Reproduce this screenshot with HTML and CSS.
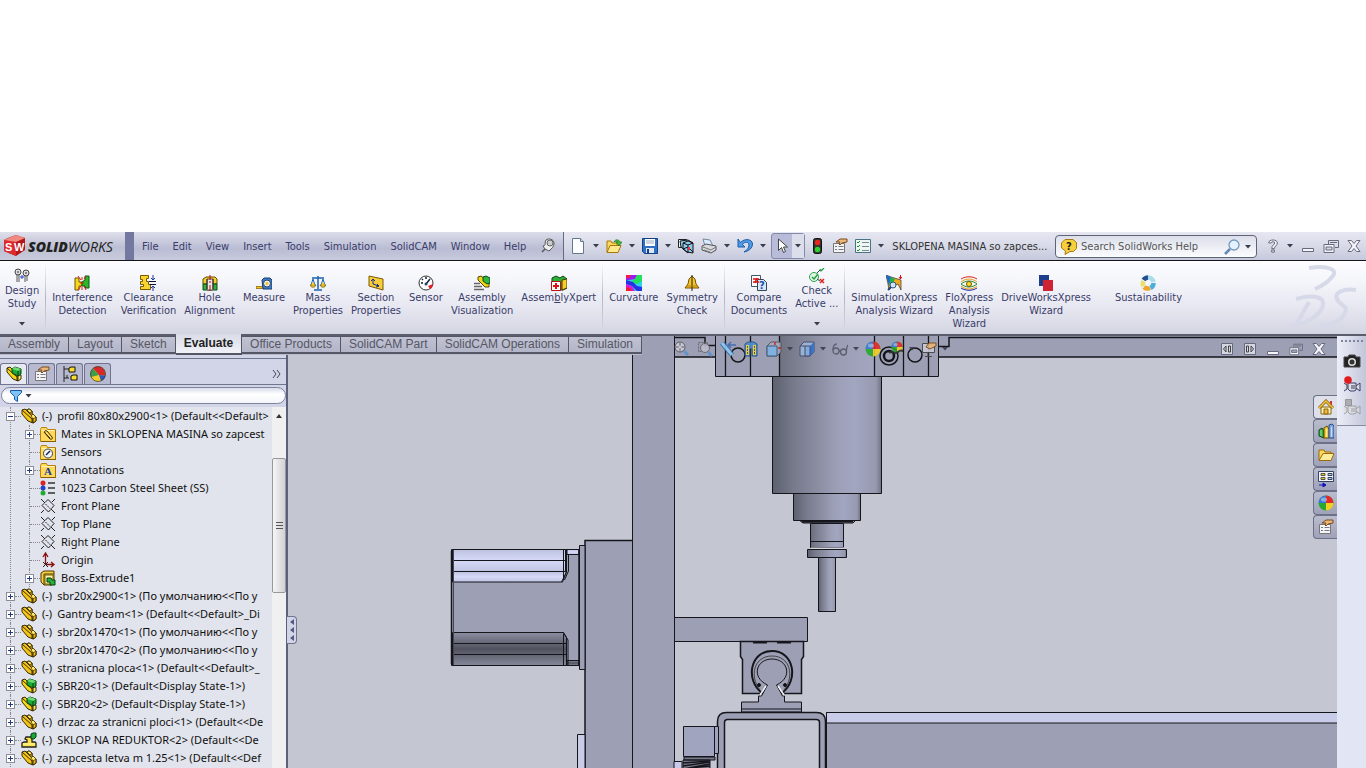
FILE: index.html
```
<!DOCTYPE html>
<html lang="en">
<head>
    <meta charset="UTF-8">
    <meta name="viewport" content="width=device-width, initial-scale=1.0">
    <title>SolidWorks - SKLOPENA MASINA</title>
    <link rel="stylesheet" href="styles.css">
</head>
<body>
    <svg class="defs" aria-hidden="true">
        <defs>
            <linearGradient id="cyl"><stop offset="0" stop-color="#5d606e"/><stop offset=".2" stop-color="#787b8c"/><stop offset=".6" stop-color="#9c9fb6"/><stop offset=".75" stop-color="#a3a6c1"/><stop offset=".95" stop-color="#9699ae"/><stop offset="1" stop-color="#6f7282"/></linearGradient>
            <linearGradient id="headShade"><stop offset="0" stop-color="#6e7180"/><stop offset=".5" stop-color="#979aaf"/><stop offset="1" stop-color="#a3a6bf"/></linearGradient>
            <linearGradient id="rib" x2="0" y2="1"><stop offset="0" stop-color="#8c8fa2"/><stop offset=".5" stop-color="#50525e"/><stop offset="1" stop-color="#858899"/></linearGradient>
            <linearGradient id="ribLight" x2="0" y2="1"><stop offset="0" stop-color="#bcc2e0"/><stop offset=".5" stop-color="#d6daf8"/><stop offset="1" stop-color="#bec4e2"/></linearGradient>
        </defs>
        <symbol id="i-part" viewBox="0 0 16 16">
            <path d="M1 2l3-1 8 8v6L7 13 1 6z" fill="#f4c518" stroke="#3a2c00"/>
            <path d="M1 2l10 9v4M5 2l3-1 3 2v3l4 3v4l-3 2" fill="none" stroke="#3a2c00"/>
            <path d="M6 2l2-1 3 2v3l4 3v4l-3 2V9z" fill="#f0b91c" stroke="#3a2c00"/>
            <path d="M6 2l2-1 3 2-2 2zM10 8l2-2 3 3-3 2z" fill="#ffe56b" stroke="#3a2c00" stroke-width=".7"/>
        </symbol>
        <symbol id="i-asm" viewBox="0 0 16 16">
            <path d="M1 2l3-1 8 8v6L7 13 1 6z" fill="#f4d518" stroke="#3a2c00"/>
            <path d="M1 2l10 9v4" fill="none" stroke="#3a2c00"/>
            <path d="M12 9h3v4l-3 2z" fill="#ffe56b" stroke="#3a2c00"/>
            <path d="M6 3l3-2 6 2v5l-3 2-6-3z" fill="#1fa838" stroke="#063d10"/>
            <path d="M6 3l6 2 3-2-6-2z" fill="#6bdc72"/><path d="M12 5v5" stroke="#063d10"/>
        </symbol>
        <symbol id="i-sub" viewBox="0 0 16 16">
            <path d="M1 15v-4l2-1h3V8L4 7l1-2h6v5h3l1 1v4z" fill="#ffe447" stroke="#222" stroke-width="1.3"/>
            <path d="M10 2l2-1h3v4l-2 2h-3z" fill="#1fa838" stroke="#063d10"/><path d="M2 12h12" stroke="#fff8b0"/>
        </symbol>
        <symbol id="i-folder" viewBox="0 0 16 16">
            <path d="M.5 3.5l1-2h5l1 2h8v12H.5z" fill="#ffd95c" stroke="#b98210"/><path d="M1.500 4.500h13" stroke="#fff3b8"/><path d="M1 15.500h15V4" fill="none" stroke="#8a5c00"/>
        </symbol>
        <symbol id="i-plane" viewBox="0 0 16 16">
            <path d="M1 1l14 14M8 1.500L14 7.500 8.500 14 2 7.500zM1 15l3-3M12 4l3-3" fill="none" stroke="#222"/><path d="M5 5l6 6" stroke="#e1e4ec" stroke-width="2"/><path d="M5.500 6l5 5" stroke="#222" stroke-dasharray="2 1"/>
        </symbol>
        <symbol id="i-ball" viewBox="0 0 16 16">
            <circle cx="8" cy="8" r="7.500" fill="#28a92e"/><path d="M8 8V.5A7.500 7.500 0 0 1 15.500 8z" fill="#e02c2a"/><path d="M8 8H.5A7.500 7.500 0 0 1 8 .5z" fill="#3b78d8"/><path d="M8 8h7.500A7.500 7.500 0 0 1 8 15.500z" fill="#f5cf25"/><ellipse cx="6" cy="4.500" rx="3" ry="2" fill="#fff" opacity=".4"/>
        </symbol>
        <symbol id="i-ball-red" viewBox="0 0 16 16">
            <circle cx="8" cy="8" r="7.500" fill="#f5cf25"/><path d="M9 9L3 2.500C6-.5 12 0 14.500 4.500l1 5z" fill="#d8282c"/><path d="M9 9L3 2.500C-.5 6 0 9 1 11z" fill="#3f9c48"/><path d="M9 9l6.500.500c-.5 3-2 4.500-4.500 5.500z" fill="#2c56c0"/><circle cx="8" cy="8" r="7.500" fill="none" stroke="#333" stroke-width=".7"/>
        </symbol>
        <symbol id="i-props" viewBox="0 0 16 16">
            <path d="M1.500 5.500h11v9h-11z" fill="#f4f4f4" stroke="#777"/><path d="M3 8.500h2M3 11.500h2M6.500 8.500h5M6.500 11.500h5" stroke="#778"/>
            <path d="M4 4l4-3h7v3l-5 1-2 2-1-1 1-2z" fill="#e9b77a" stroke="#7b4a1c"/>
        </symbol>
        <symbol id="i-restore" viewBox="0 0 16 14">
            <path d="M5.500 5V1.500h10v7H12M7 3.500h7" fill="none" stroke="#666a7b"/><path d="M1 5.500h10v8H1zM3 8h6v3H3z" fill="#f4f4fa" fill-rule="evenodd" stroke="#666a7b"/>
        </symbol>
        <symbol id="i-close" viewBox="0 0 14 14">
            <path d="M1 1.500h3.500L7 4.500l2.500-3H13L9 7l4 5.500H9.500L7 9.500l-2.500 3H1L5 7z" fill="#f4f4fa" stroke="#666a7b"/>
        </symbol>
        <symbol id="i-min" viewBox="0 0 14 14"><path d="M1.500 9.500h11v3h-11z" fill="#f4f4fa" stroke="#666a7b"/></symbol>
        <symbol id="i-arrow" viewBox="0 0 6 4"><path d="M0 0h6L3 3.500z" fill="#3a3c4c"/></symbol>
        <symbol id="i-cam" viewBox="0 0 18 12">
            <path d="M1 3l3 2v4l-3 2M5 3h8v7l-2 1H7L5 9zM13 6l4-3v8l-4-3" fill="#ddd" stroke="currentColor"/><path d="M8 6h4M8 8h4" stroke="currentColor"/>
        </symbol>
    </svg>

    <div class="desktop"></div>

    <header class="titlebar">
        <div class="brand">
            <svg class="cube" viewBox="0 0 24 22">
                <path d="M6 3L14 0l9 3v12l-9 6L2 16V5z" fill="#b5161b"/><path d="M2 5l12 2v14L2 16z" fill="#dd2a2c"/><path d="M14 7l9-4-9-3L2 5z" fill="#f08a80"/>
                <text x="3" y="16" class="cube-text">S</text><text x="12" y="16" class="cube-text">W</text>
            </svg>
            <span class="brand-name"><b>SOLID</b>WORKS</span>
        </div>
        <nav class="menu">
            <a href="#">File</a><a href="#">Edit</a><a href="#">View</a><a href="#">Insert</a><a href="#">Tools</a><a href="#">Simulation</a><a href="#">SolidCAM</a><a href="#">Window</a><a href="#">Help</a>
            <svg class="pin" viewBox="0 0 14 16"><path d="M1 14l4-4" stroke="#555" stroke-width="1.500"/><path d="M2 8c4-1 1-3 3-6 2-2 8-1 8 3s-2 5-5 8c-2-1-5-2-6-5z" fill="#eee" stroke="#555"/><circle cx="9" cy="5" r="3" fill="#ccc" stroke="#666"/></svg>
        </nav>
        <div class="quick">
            <button class="tool" aria-label="New"><svg viewBox="0 0 16 16"><path d="M2.500.5h8l3 3v12h-11z" fill="#fdfeff" stroke="#64788c"/><path d="M10.500.5v3h3" fill="#cde" stroke="#64788c"/></svg></button>
            <button class="drop" aria-label="New options"><svg><use href="#i-arrow"/></svg></button>
            <button class="tool" aria-label="Open"><svg viewBox="0 0 16 16"><path d="M1 14V3h4l1 2h5v3" fill="#ffd95c" stroke="#a87608"/><path d="M1 14.500l3-7h11l-3 7z" fill="#ffe88e" stroke="#a87608"/><path d="M8 4c1-3 5-3 6 0h2l-3 4-3-4h2c-1-1-2-1-4 0z" fill="#43b83a" stroke="#1b7414" stroke-width=".6"/></svg></button>
            <button class="drop" aria-label="Open options"><svg><use href="#i-arrow"/></svg></button>
            <button class="tool" aria-label="Save"><svg viewBox="0 0 16 16"><path d="M.5.5h15v15H2.500l-2-2z" fill="#2f6fc4" stroke="#123f86"/><path d="M3 1h10v7H3z" fill="#fff"/><path d="M4 3h8M4 5h8" stroke="#9ab"/><path d="M4 10h8v5H4z" fill="#dde6f2"/><path d="M5 11h2v4H5z" fill="#123f86"/></svg></button>
            <button class="drop" aria-label="Save options"><svg><use href="#i-arrow"/></svg></button>
            <button class="tool" aria-label="Make drawing"><svg viewBox="0 0 16 16"><path d="M.5 1.500h8v8h-8z" fill="#fff" stroke="#222"/><path d="M2 3l8-1 5 3v10l-6-1-6-5z" fill="#8fcbee" stroke="#111"/><path d="M5 5v6l5 4V7zM5 5l5-2 5 2M10 7l5-2M5 11l5-2 5 5" fill="none" stroke="#111"/><path d="M11 9v3" stroke="#e33" stroke-width="2"/></svg></button>
            <button class="tool print" aria-label="Print"><svg viewBox="0 0 16 16"><path d="M4 8L2 1l7 1 3 6" fill="#d8edff" stroke="#789"/><path d="M1 8l4-2 10 2v4l-5 3-9-3z" fill="#d8d8de" stroke="#555"/><path d="M2 9l8 3 5-3M3 12l6 2" fill="none" stroke="#777"/></svg></button>
            <button class="drop" aria-label="Print options"><svg><use href="#i-arrow"/></svg></button>
            <button class="tool" aria-label="Undo"><svg viewBox="0 0 16 16"><path d="M1 1v8h7L5.500 6.500C8 3 12 4 12 7c0 3-2 5-5 7 5-1 8.500-4 8.500-8 0-5-8-6-12-1.500z" fill="#4f9be6" stroke="#1c5ca8"/></svg></button>
            <button class="drop" aria-label="Undo options"><svg><use href="#i-arrow"/></svg></button>
            <div class="select-group">
                <button class="tool" aria-label="Select"><svg viewBox="0 0 16 16"><path d="M4.500 1v11.500l3-3 2 5 2-1-2-4.500h4z" fill="#fff" stroke="#444"/></svg></button>
                <button class="drop" aria-label="Select options"><svg><use href="#i-arrow"/></svg></button>
            </div>
            <button class="tool" aria-label="Rebuild"><svg viewBox="0 0 16 16"><rect x="4.500" y=".5" width="8" height="15" rx="2" fill="#333" stroke="#111"/><circle cx="8.500" cy="4.500" r="2.700" fill="#e8261e"/><circle cx="8.500" cy="11.500" r="2.700" fill="#2ed12a"/></svg></button>
            <button class="tool spaced" aria-label="File properties"><svg><use href="#i-props"/></svg></button>
            <button class="tool spaced" aria-label="Options"><svg viewBox="0 0 16 16"><path d="M.5 1.500h15v13H.5z" fill="#eef6f2" stroke="#4a7484"/><path d="M2 4l1 1 2-2M2 8l1 1 2-2M2 12l1 1 2-2" fill="none" stroke="#1c8a34"/><path d="M7 4.500h7M7 8.500h7M7 12.500h7" stroke="#789"/></svg></button>
            <button class="drop" aria-label="More options"><svg><use href="#i-arrow"/></svg></button>
            <span class="doc-title">SKLOPENA MASINA so zapces...</span>
        </div>
        <form class="search">
            <svg class="search-help" viewBox="0 0 16 16"><path d="M4 .5h8l3.500 3v6l-3 3H9L4 15.500l.5-3.500L.5 9V4z" fill="#f7cf3a" stroke="#a87a10"/><text x="5" y="11" class="q">?</text></svg>
            <input type="text" aria-label="Search" placeholder="Search SolidWorks Help">
            <svg class="glass" viewBox="0 0 16 16"><path d="M1 15l5-5" stroke="#6488b4" stroke-width="2.500"/><circle cx="10" cy="6" r="5" fill="#e4f2ff" stroke="#7a98bc" stroke-width="1.300"/></svg>
            <button type="button" class="drop" aria-label="Search scope"><svg><use href="#i-arrow"/></svg></button>
        </form>
        <div class="window-buttons">
            <button class="help" aria-label="Help"><svg viewBox="0 0 12 16"><path d="M1 4.500C1 0 11 0 11 4.500 11 8 7.500 8 7.500 11h-3C4.500 7 8 6.500 8 4.500S4 3 4 4.500zM4.500 12.500h3v2.500h-3z" fill="#f4f4fa" stroke="#555a6a"/></svg></button>
            <button class="drop" aria-label="Help options"><svg><use href="#i-arrow"/></svg></button>
            <button aria-label="Minimize"><svg><use href="#i-min"/></svg></button>
            <button aria-label="Restore"><svg><use href="#i-restore"/></svg></button>
            <button aria-label="Close"><svg><use href="#i-close"/></svg></button>
        </div>
    </header>

    <section class="ribbon">
        <button class="cmd high"><svg viewBox="0 0 16 16"><path d="M3 5v9M5 6v8M11 6v8M13 6v7" stroke="#555"/><circle cx="4" cy="4" r="3" fill="#ddd" stroke="#444"/><circle cx="12" cy="5" r="3" fill="#ddd" stroke="#444"/><path d="M3 4h2M11 5h2" stroke="#333"/><path d="M6 9h4M8 7v4" stroke="#24c"/></svg>Design<br>Study<svg class="more"><use href="#i-arrow"/></svg></button>
        <hr>
        <button class="cmd"><svg viewBox="0 0 16 16"><path d="M1 3h4v4h3v4H5v4H1z" fill="#f8d81c" stroke="#6a5400"/><path d="M15 1h-4v4L8 7v4h3v2h4z" fill="#2cb82c" stroke="#0d5a12"/><path d="M8 2v3M4 1l3 4M12 1l-2 3M8 12v3M4 15l3-4M12 15l-2-4M6 8h4" stroke="#e01818"/></svg>Interference<br>Detection</button>
        <button class="cmd"><svg viewBox="0 0 16 16"><path d="M.5.5h8v3h-2v3h2v3h2v5h-10v-3h3v-2h-3v-3h2v-2h-2z" fill="#f8d430" stroke="#7a5800"/><path d="M9 6.500h7M10 9.500h6" stroke="#113"/><path d="M13 0v5M13 16v-5M11 3l2 2 2-2M11 13l2-2 2 2" fill="none" stroke="#1538a8"/></svg>Clearance<br>Verification</button>
        <button class="cmd"><svg viewBox="0 0 16 16"><path d="M1 4l3-2h9l2 2v5H1z" fill="#f6cf2e" stroke="#604c00"/><path d="M1 9h14v6H1z" fill="#30b238" stroke="#0d4a12"/><path d="M5 4h6v11H5z" fill="#e8e8e8" stroke="#555"/><path d="M8 0v5M8 6v2M8 10v6" stroke="#c00"/><path d="M5 4v10M11 4v10" stroke="#222"/></svg>Hole<br>Alignment</button>
        <button class="cmd"><svg viewBox="0 0 16 16"><path d="M0 11.500h7v2H0z" fill="#f2c21c" stroke="#7a5800" stroke-width=".7"/><path d="M6 5l2-2h6l2 2v9H7z" fill="#3f7ccc" stroke="#173c70"/><circle cx="11" cy="8.500" r="3.500" fill="#e8f0f8" stroke="#345"/><circle cx="11" cy="8.500" r="1.500" fill="#f0c020"/></svg>Measure</button>
        <button class="cmd"><svg viewBox="0 0 16 16"><path d="M8 1v13M2 3h12M4 15h8" stroke="#1b62b4" stroke-width="1.500"/><path d="M3 4L1 10M3 4l2 6M13 4l-2 6M13 4l2 6" stroke="#1b62b4"/><path d="M0 10h6c-1 3-5 3-6 0zM10 10h6c-1 3-5 3-6 0z" fill="#f5c928" stroke="#6a5000" stroke-width=".7"/><circle cx="3" cy="9" r="1.500" fill="#f5c928"/><circle cx="13" cy="9" r="1.500" fill="#f5c928"/></svg>Mass<br>Properties</button>
        <button class="cmd"><svg viewBox="0 0 16 16"><path d="M1 1l14 3v11L1 11z" fill="#f7cd3c" stroke="#7a5800"/><path d="M5 9V4M3 6l2-2 2 2M5 9l6 2M9 9l2 2-3 1" fill="none" stroke="#152c8a"/></svg>Section<br>Properties</button>
        <button class="cmd"><svg viewBox="0 0 16 16"><circle cx="8" cy="8" r="7" fill="#fff" stroke="#333"/><path d="M3 8h2M8 2v2M4 4l1 1M8 9l4-5" stroke="#124" stroke-width="1.500"/><circle cx="8" cy="9" r="1.500" fill="#246"/><path d="M10 11l5-2c0 3-2 5-3 5z" fill="#d22"/></svg>Sensor</button>
        <button class="cmd"><svg viewBox="0 0 16 16"><path d="M4 2l3-1 8 6v5L11 12 4 5z" fill="#f4d518" stroke="#554400"/><path d="M9 2l3-1 4 2v5l-3 1-4-3z" fill="#2fb540" stroke="#0c4a14"/><path d="M0 8.500h6M0 11.500h8M0 14.500h10" stroke="#666" stroke-width="1.500"/></svg>Assembly<br>Visualization</button>
        <button class="cmd"><svg viewBox="0 0 16 16"><path d="M1 3l4-2 4 2 3-2 4 3v9l-4 2H8L1 7z" fill="#2cae3a" stroke="#0b4613"/><path d="M11 5l5-1v9l-5 2z" fill="#f3cf28" stroke="#4c3b00"/><path d="M.5 6.500h9v9h-9z" fill="#fff" stroke="#b11"/><path d="M5 8v6M2 11h6" stroke="#d11" stroke-width="2"/></svg><span>Assem<u>b</u>lyXpert</span></button>
        <hr>
        <button class="cmd"><svg viewBox="0 0 16 16"><path d="M0 0h16v16H0z" fill="#2ad1e8"/><path d="M0 0h5v3H0z" fill="#f01c50"/><path d="M5 0h6L9 4 3 5H0V3h4z" fill="#9c1cf0"/><path d="M11 0h5v6l-5 3-6-2 4-3z" fill="#22e05a"/><path d="M0 5l7 2 4 4 5 1v4h-5L6 11l-6-2z" fill="#2433e8"/><path d="M0 9l6 2 3 5H0z" fill="#d21ce0"/><path d="M0 12l4 1 2 3H0z" fill="#f21c30"/></svg>Curvature</button>
        <button class="cmd"><svg viewBox="0 0 16 16"><path d="M8 1l3 3 1 5 3 4H1l3-4 1-5z" fill="#f6c62c" stroke="#7a5000"/><path d="M8 0v16" stroke="#222"/><path d="M2 11h12" stroke="#b87c08"/></svg>Symmetry<br>Check</button>
        <hr>
        <button class="cmd"><svg viewBox="0 0 16 16"><path d="M.5.5h9v11h-9z" fill="#fff" stroke="#456"/><path d="M6.500 4.500h6l3 3v8h-9z" fill="#d8e8fa" stroke="#345"/><path d="M2 4h6M2 7h6M6 3L4 8" stroke="#d11" stroke-width="1.500"/><text x="8" y="14" class="q blue">?</text></svg>Compare<br>Documents</button>
        <button class="cmd high"><svg viewBox="0 0 16 16"><circle cx="5" cy="9" r="4.500" fill="#dff5e4" stroke="#2aa64a"/><path d="M3 9l2 2 4-5M11 1l1 2 3-3" fill="none" stroke="#1c9c3c" stroke-width="1.300"/><path d="M8 5l3-3M8 11l3 2" stroke="#246"/><path d="M11 11l4 4M15 11l-4 4" stroke="#d22" stroke-width="1.500"/></svg>Check<br>Active ...<svg class="more"><use href="#i-arrow"/></svg></button>
        <hr>
        <button class="cmd"><svg viewBox="0 0 16 16"><path d="M0 0l5 2 10 3v10l-3-6-5 2-4 4-1-6z" fill="#f0a81c" stroke="#333" stroke-width=".7"/><path d="M0 0l5 2-2 9z" fill="#1a68d0"/><path d="M5 2l4 2-4 7-2-1z" fill="#1cb448"/><path d="M14.500 0v4M13 2l1.500 2L16 2" fill="none" stroke="#d11"/><circle cx="7" cy="10" r="3" fill="#cfe4fa" stroke="#357"/><path d="M5 12l-3 3" stroke="#247" stroke-width="2"/></svg>SimulationXpress<br>Analysis Wizard</button>
        <button class="cmd"><svg viewBox="0 0 16 16"><path d="M0 4c5-3 11-3 16 0" fill="none" stroke="#d22"/><path d="M0 7c5-4 11-4 16 0" fill="none" stroke="#e8a010"/><path d="M0 9c5-4 11-4 16 0M0 9c5 4 11 4 16 0" fill="none" stroke="#2b8a3b"/><path d="M0 11c5 4 11 4 16 0" fill="none" stroke="#e8a010"/><path d="M0 13c5 3 11 3 16 0" fill="none" stroke="#22a"/><circle cx="8" cy="9" r="2.500" fill="#f8e020" stroke="#750"/></svg>FloXpress<br>Analysis<br>Wizard</button>
        <button class="cmd"><svg viewBox="0 0 16 16"><path d="M1 0h10v11H1z" fill="#1d3e8c"/><path d="M5 5h10v11H5z" fill="#cf2232"/></svg>DriveWorksXpress<br>Wizard</button>
        <button class="cmd apart"><svg viewBox="0 0 16 16"><g fill="none" stroke-width="4.500"><path d="M3.500 5A5.500 5.500 0 0 1 8 2.500" stroke="#24508c"/><path d="M8 2.500A5.500 5.500 0 0 1 13.500 7" stroke="#a9dcec"/><path d="M13.500 8a5.500 5.500 0 0 1-3 5" stroke="#49b0de"/><path d="M10 13a5.500 5.500 0 0 1-6-1" stroke="#f0a32a"/><path d="M3.500 11a5 5 0 0 1 0-5" stroke="#eadf6a"/></g></svg>Sustainability</button>
        <svg class="ds-logo" viewBox="0 0 68 64"><g fill="none" stroke="#d6d9e8" stroke-width="4"><path d="M20 4C40 1 50 6 43 13 39 18 33 22 26 25"/><path d="M7 35C26 30 38 33 33 44 28 54 14 61 2 62M20 38L7 61"/><path d="M67 26C54 24 45 29 48 35 50 41 60 42 56 49 52 58 40 62 30 62"/></g></svg>
    </section>

    <main class="workspace">
        <nav class="ribbon-tabs">
            <a href="#">Assembly</a><a href="#">Layout</a><a href="#">Sketch</a><a href="#" class="active">Evaluate</a><a href="#">Office Products</a><a href="#">SolidCAM Part</a><a href="#">SolidCAM Operations</a><a href="#">Simulation</a>
        </nav>

        <aside class="manager">
            <div class="manager-tabs">
                <button class="active" aria-label="Feature tree"><svg><use href="#i-asm"/></svg></button>
                <button aria-label="Property manager"><svg><use href="#i-props"/></svg></button>
                <button aria-label="Configurations"><svg viewBox="0 0 16 16"><path d="M2 0v16M2 3h5M2 12h5M5 12V9" fill="none" stroke="#222"/><path d="M7 2l2-1h4v5H7zM9 10l2-1h4v5H9z" fill="#f8dd30" stroke="#111"/></svg></button>
                <button aria-label="Display manager"><svg><use href="#i-ball-red"/></svg></button>
                <a href="#" class="expand" aria-label="Expand"><svg viewBox="0 0 9 8"><path d="M1 0l3 4-3 4M5 0l3 4-3 4" fill="none" stroke="#445"/></svg></a>
            </div>
            <div class="filter">
                <button aria-label="Filter"><svg class="funnel" viewBox="0 0 12 12"><path d="M.5.5h11v2l-4 4v5l-3-2v-3l-4-4z" fill="#7fc2f4" stroke="#1458a8"/></svg><svg class="tri"><use href="#i-arrow"/></svg></button>
            </div>
            <div class="tree-box">
                <ul class="tree">
                    <li>
                        <div class="row"><i class="box minus"></i><i class="dots"></i><svg><use href="#i-part"/></svg><span>(-)</span>profil 80x80x2900&lt;1&gt; (Default&lt;&lt;Default&gt;</div>
                        <ul>
                            <li><div class="row"><i class="box"></i><i class="dots"></i><svg viewBox="0 0 16 16"><use href="#i-folder"/><path d="M4 6l6 7c2 1 3-1 2-2L7 5C5 4 4 5 5 7l5 5" fill="none" stroke="#443000"/></svg>Mates in SKLOPENA MASINA so zapcest</div></li>
                            <li><div class="row leaf"><i class="dots"></i><svg viewBox="0 0 16 16"><use href="#i-folder"/><circle cx="8" cy="9.500" r="4.500" fill="#f6f8ff" stroke="#345"/><path d="M6 11l4-4" stroke="#124" stroke-width="1.500"/></svg>Sensors</div></li>
                            <li><div class="row"><i class="box"></i><i class="dots"></i><svg viewBox="0 0 16 16"><use href="#i-folder"/><text x="4" y="13" class="note">A</text></svg>Annotations</div></li>
                            <li><div class="row leaf"><i class="dots"></i><svg viewBox="0 0 16 16"><path d="M3 2v12" stroke="#444"/><circle cx="3" cy="3" r="2.500" fill="#d22"/><circle cx="3" cy="8" r="2.500" fill="#24c"/><circle cx="3" cy="13" r="2.500" fill="#2a3"/><path d="M8 3h7M8 8h7M8 13h7" stroke="#333" stroke-width="1.500"/></svg>1023 Carbon Steel Sheet (SS)</div></li>
                            <li><div class="row leaf"><i class="dots"></i><svg><use href="#i-plane"/></svg>Front Plane</div></li>
                            <li><div class="row leaf"><i class="dots"></i><svg><use href="#i-plane"/></svg>Top Plane</div></li>
                            <li><div class="row leaf"><i class="dots"></i><svg><use href="#i-plane"/></svg>Right Plane</div></li>
                            <li><div class="row leaf"><i class="dots"></i><svg viewBox="0 0 16 16"><path d="M5.500 13V2M3 5l2.500-4L8 5M6 12.500h8M11 10l3 2.500-3 2.500" fill="none" stroke="#8a1010" stroke-width="1.300"/><path d="M3 10l5 5M8 10l-5 5" stroke="#222"/></svg>Origin</div></li>
                            <li><div class="row"><i class="box"></i><i class="dots"></i><svg viewBox="0 0 16 16"><path d="M1 3l3-2h10v11l-2 3H4l-3-3z" fill="#f6cf45" stroke="#4c3a00"/><path d="M4 4h10M4 4v11" stroke="#4c3a00"/><path d="M5 5h8v9H5z" fill="#fff3b0" stroke="#7a5c00"/><path d="M7 8h4l1 2h3v5h-5v-3H7z" fill="#25b13a" stroke="#063d10"/></svg>Boss-Extrude1</div></li>
                        </ul>
                    </li>
                    <li><div class="row"><i class="box"></i><i class="dots"></i><svg><use href="#i-part"/></svg><span>(-)</span>sbr20x2900&lt;1&gt; (По умолчанию&lt;&lt;По у</div></li>
                    <li><div class="row"><i class="box"></i><i class="dots"></i><svg><use href="#i-part"/></svg><span>(-)</span>Gantry beam&lt;1&gt; (Default&lt;&lt;Default&gt;_Di</div></li>
                    <li><div class="row"><i class="box"></i><i class="dots"></i><svg><use href="#i-part"/></svg><span>(-)</span>sbr20x1470&lt;1&gt; (По умолчанию&lt;&lt;По у</div></li>
                    <li><div class="row"><i class="box"></i><i class="dots"></i><svg><use href="#i-part"/></svg><span>(-)</span>sbr20x1470&lt;2&gt; (По умолчанию&lt;&lt;По у</div></li>
                    <li><div class="row"><i class="box"></i><i class="dots"></i><svg><use href="#i-part"/></svg><span>(-)</span>stranicna ploca&lt;1&gt; (Default&lt;&lt;Default&gt;_</div></li>
                    <li><div class="row"><i class="box"></i><i class="dots"></i><svg><use href="#i-asm"/></svg><span>(-)</span>SBR20&lt;1&gt; (Default&lt;Display State-1&gt;)</div></li>
                    <li><div class="row"><i class="box"></i><i class="dots"></i><svg><use href="#i-asm"/></svg><span>(-)</span>SBR20&lt;2&gt; (Default&lt;Display State-1&gt;)</div></li>
                    <li><div class="row"><i class="box"></i><i class="dots"></i><svg><use href="#i-part"/></svg><span>(-)</span>drzac za stranicni ploci&lt;1&gt; (Default&lt;&lt;De</div></li>
                    <li><div class="row"><i class="box"></i><i class="dots"></i><svg><use href="#i-sub"/></svg><span>(-)</span>SKLOP NA REDUKTOR&lt;2&gt; (Default&lt;&lt;De</div></li>
                    <li><div class="row"><i class="box"></i><i class="dots"></i><svg><use href="#i-part"/></svg><span>(-)</span>zapcesta letva m 1.25&lt;1&gt; (Default&lt;&lt;Def</div></li>
                </ul>
                <div class="scrollbar">
                    <svg class="up" viewBox="0 0 6 4"><path d="M0 4h6L3 0z" fill="#333"/></svg>
                    <div class="thumb"><i></i><i></i><i></i></div>
                </div>
            </div>
            <button class="splitter" aria-label="Collapse panel"><svg viewBox="0 0 4 22"><path d="M4 0v6L0 3zM4 8v6l-4-3zM4 16v6l-4-3z" fill="#555a80"/></svg></button>
        </aside>

        <section class="scene">
            <svg class="model">
                <g transform="translate(-288 -336)" stroke="#15151c" fill="#9da0b4">
                    <!-- gantry cross beam -->
                    <path d="M674 336H2600V357H674z" stroke="none"/>
                    <path d="M674 357H2600M674 337.500h31v8h10M939 346.500h10v-9H2600" fill="none" stroke-width="1.500"/>
                    <!-- side plates -->
                    <path d="M585 1400V540.500h50V1400z" stroke-width="1.500"/>
                    <path d="M633 336h41v1064h-41z" stroke="none"/><path d="M632.500 336v1064M674.500 336v1064"/>
                    <path d="M579.500 545.500h5.500v124h-5.500z"/>
                    <path d="M577.500 1400V734.500h7.500V1400z" fill="#c8cce8"/>
                    <!-- stepper motor -->
                    <path d="M451.500 549.500h128v116h-128z"/>
                    <g fill="url(#ribLight)"><path d="M452.500 549.500h113v11h-113zM452.500 560.500h113v11h-113z"/><path d="M452.500 571.500h114l-4 10.500h-110z"/><path d="M567 549.500h12v5h-12z"/></g>
                    <g fill="url(#rib)"><path d="M452.500 632.500h111l3 5v6h-114zM452.500 643.500h114v11h-114zM452.500 654.500h114v11h-114z"/><path d="M567 660.500h12v5h-12z"/></g>
                    <path d="M563.500 550v30M566.500 550v22l-5 10M568.500 555v16l-4 9M563.500 634v31M566.500 640v25M563 632l5 8v25" fill="none"/>
                    <path d="M451.500 551v113M579 549v117" stroke-width="1.500"/><path d="M453.500 550v115" stroke="#444754"/>
                    <!-- spindle head -->
                    <path d="M715.500 336v40.500h223V336" /><path d="M779.500 336h95v40h-95z" fill="url(#headShade)" stroke="none"/>
                    <path d="M725.500 336v40M750.500 336v40M779.500 336v40M874.500 336v40M903.500 336v40M928.500 336v40" stroke-width="1.300"/>
                    <g fill="none" stroke-width="1.500"><circle cx="738" cy="355" r="7"/><circle cx="915" cy="355" r="7"/><circle cx="889" cy="356" r="9"/><circle cx="889" cy="356" r="5" stroke-width="2.500"/></g>
                    <g fill="url(#cyl)">
                        <path d="M772.500 376.500h109v117h-109z"/>
                        <path d="M799 520h57l-3 3h-50z"/>
                        <path d="M793.500 493.500h67v27h-67z"/>
                        <path d="M810.500 523.500h33v18h-33zM810.500 541.500h33v6h-33zM807.500 549.500h39v8h-39z"/>
                        <path d="M818.500 557.500h17v54h-17z"/>
                    </g>
                    <path d="M811 548h33" stroke="#e4e6ee"/><path d="M802 521.500h51" stroke-width="2"/>
                    <!-- table and linear bearing -->
                    <path d="M674.500 617.500h133v24h-133z"/>
                    <path d="M740.500 641.500h63v15l-2 3v34h-59v-34l-2-3z" stroke-width="1.500"/>
                    <path d="M753 642.500h14M777 642.500h14" stroke-width="2"/>
                    <g fill="none"><path d="M762 693c-17-13-12-42 10-42s27 29 10 42" stroke-width="2"/><path d="M760 690c-11-14-6-34 12-34s23 20 12 34" stroke="#444"/></g>
                    <path d="M741.500 712v-10h17v-6h3l6-11c-17-8-11-26 4.500-26s21.500 18 4.500 26l6 11h2v6h17v10z"/>
                    <path d="M741 709h61"/>
                    <path d="M766 686l-6 9M778 686l6 9" stroke="#f4f4f4" stroke-width="1.500"/><circle cx="759" cy="685" r="1.500" fill="#111"/><circle cx="785" cy="685" r="1.500" fill="#111"/>
                    <!-- square tube, long rail, rack -->
                    <path d="M717.500 1400V721.500q0-9 9-9h90q9 0 9 9V1400z" stroke-width="1.500"/>
                    <path d="M724.500 1400V722.500q0-3 3-3h89q3 0 3 3V1400z" fill="#c4c7d2" stroke-width="1.500"/>
                    <path d="M826.500 712.500H2600V1400H826.500z"/><path d="M826.500 712.500H2600v10.500H826.500z" fill="#c8cce8"/>
                    <path d="M714.500 726.500h4v27h-4zM683.500 726.500h31v30h-31z" fill="#a1a4be"/>
                    <path d="M684 757h31v3h-31zM683 760h27v600h-27z" fill="#777a8a"/><path d="M683 763l27-2M683 766l27-4M683 769l27-5M690 768l20-2" stroke-width="1.300"/>
                    <path d="M674 761.500h8v600h-8z" fill="#c8cce8"/>
                </g>
            </svg>
            <div class="view-tools">
                <button aria-label="Zoom to fit"><svg viewBox="0 0 16 16"><circle cx="6" cy="6" r="5" fill="#ccd" stroke="#555"/><path d="M6 2v8M2 6h8" stroke="#555"/><circle cx="6" cy="6" r="1.500" fill="#ccd"/><path d="M10 10l4 4" stroke="#5b94cc" stroke-width="3"/></svg></button>
                <button aria-label="Zoom to area"><svg viewBox="0 0 16 16"><path d="M1.500 1.500h9v9h-9z" fill="none" stroke="#666" stroke-dasharray="2 1"/><circle cx="8" cy="7" r="4.500" fill="#bbc" stroke="#666"/><path d="M11 11l4 4" stroke="#5b94cc" stroke-width="3"/></svg></button>
                <button aria-label="Previous view"><svg viewBox="0 0 16 16"><path d="M2 2l10 12" stroke="#3268a0" stroke-width="5"/><path d="M2 2l10 12" stroke="#8fc8f4" stroke-width="3"/><path d="M8 4h8M11 1L8 4l3 3" fill="none" stroke="#3c68b4" stroke-width="1.500"/></svg></button>
                <button aria-label="Section view"><svg viewBox="0 0 16 16"><path d="M2 3c3-3 9-3 12 0v12H9V8H7v7H2z" fill="#4a8ed4" stroke="#224a7a"/><path d="M3 4h3v10H3zM10 4h3v10h-3z" fill="#f0d040"/><path d="M4.500 5v9M11.500 5v9" stroke="#553" stroke-dasharray="2 1"/></svg></button>
                <button aria-label="View orientation"><svg viewBox="0 0 16 16"><path d="M1 5l4-4h10v10l-4 4H1z" fill="#a6a9bc" stroke="#555"/><path d="M1 5h10v10H1z" fill="#7fb4e4" stroke="#357"/><path d="M9 1v3M12 7h3" stroke="#c22" stroke-width="1.500"/></svg></button>
                <button class="drop" aria-label="Orientation options"><svg><use href="#i-arrow"/></svg></button>
                <button aria-label="Display style"><svg viewBox="0 0 16 16"><path d="M1 5l4-4h10v10l-4 4H1z" fill="#9db8d8" stroke="#446"/><path d="M11 5l4-4v10l-4 4z" fill="#2f72d0"/><path d="M1 5h10v10H6V5" fill="#7fb0e8" stroke="#446"/></svg></button>
                <button class="drop" aria-label="Display options"><svg><use href="#i-arrow"/></svg></button>
                <button aria-label="Hide or show items"><svg viewBox="0 0 16 16"><g fill="none" stroke="#555a6a" stroke-width="1.300"><circle cx="4" cy="10" r="3"/><circle cx="11.500" cy="11" r="3"/><path d="M1 9c0-4 2-6 4-6M14 10c1-3 1-5 2-6M7 10h2"/></g></svg></button>
                <button class="drop" aria-label="Visibility options"><svg><use href="#i-arrow"/></svg></button>
                <button aria-label="Edit appearance"><svg><use href="#i-ball"/></svg></button>
                <button aria-label="Apply scene"><svg viewBox="0 0 16 16"><use href="#i-ball" x="3" y="0" width="12" height="12"/><path d="M1 12c3-3 6 2 9-1s4-1 5-1" fill="none" stroke="#333" stroke-width="2"/></svg></button>
                <button class="drop" aria-label="Scene options"><svg><use href="#i-arrow"/></svg></button>
                <button aria-label="View settings"><svg viewBox="0 0 16 16"><path d="M1.500 2.500h12v9h-12z" fill="#c8cad8" stroke="#444"/><path d="M7 12v3M4 15.500h7" stroke="#444"/><path d="M5 6l3-4h7v3l-6 3z" fill="#e9b77a" stroke="#7b4a1c"/></svg></button>
                <button class="drop" aria-label="Settings options"><svg><use href="#i-arrow"/></svg></button>
            </div>
            <div class="doc-buttons">
                <button aria-label="Previous pane"><svg viewBox="0 0 14 14"><path d="M1.500 1.500h11v11h-11z" fill="#d4d6e2" stroke="#666a7b"/><path d="M6 4L3.500 7 6 10zM8.500 4h2v6h-2z" fill="none" stroke="#444"/></svg></button>
                <button aria-label="Next pane"><svg viewBox="0 0 14 14"><path d="M1.500 1.500h11v11h-11z" fill="#d4d6e2" stroke="#666a7b"/><path d="M8 4l2.500 3L8 10zM3.500 4h2v6h-2z" fill="none" stroke="#444"/></svg></button>
                <button aria-label="Minimize document"><svg><use href="#i-min"/></svg></button>
                <button aria-label="Restore document"><svg><use href="#i-restore"/></svg></button>
                <button aria-label="Close document"><svg><use href="#i-close"/></svg></button>
            </div>
            <div class="task-tabs">
                <button class="active" aria-label="Resources"><svg viewBox="0 0 16 16"><path d="M3 8h10v7H3z" fill="#fff2b8" stroke="#8a6410"/><path d="M12 2h2v4h-2z" fill="#c33"/><path d="M1 9l7-7 7 7" fill="none" stroke="#8a6410" stroke-width="3"/><path d="M1 9l7-7 7 7" fill="none" stroke="#f4c43a" stroke-width="1.500"/><path d="M6 10h4v5H6z" fill="#e8b83a" stroke="#8a6410"/></svg></button>
                <button aria-label="Design library"><svg viewBox="0 0 16 16"><path d="M1 7l3-2 2 3v7l-5-2z" fill="#2fae3f" stroke="#0c4a14"/><path d="M6 5l3-2 2 3v9H6z" fill="#f3c93a" stroke="#664c00"/><path d="M11 2l3-1 2 2v12h-5z" fill="#7fa8e4" stroke="#2c4c88"/><path d="M3 7v6M8.500 6v8M13.500 4v10" stroke="#fff" opacity=".6"/></svg></button>
                <button aria-label="File explorer"><svg viewBox="0 0 16 16"><path d="M1 13V3h5l1 2h6v3" fill="#ffd95c" stroke="#9a6c08"/><path d="M1 13.500l4-7h11l-3 7z" fill="#ffec9c" stroke="#9a6c08"/></svg></button>
                <button aria-label="View palette"><svg viewBox="0 0 16 16"><path d="M.5.5h15v10H.5z" fill="#f4f6fa" stroke="#346"/><path d="M3 2.500h4v2H3zM3 6.500h4v2H3z" fill="#e8c830" stroke="#554"/><path d="M10 2.500h4v2h-4zM10 6.500h4v2h-4z" fill="#bcd" stroke="#346"/><path d="M1 14h5M5 12l3 2-3 2z" stroke="#11b" fill="#11b"/></svg></button>
                <button aria-label="Appearances"><svg><use href="#i-ball"/></svg></button>
                <button aria-label="Custom properties"><svg><use href="#i-props"/></svg></button>
            </div>
        </section>

        <aside class="capture">
            <div class="capture-tools">
                <button aria-label="Image capture"><svg viewBox="0 0 18 14"><path d="M1 3h4l1-2h6l1 2h4v10H1z" fill="#222" stroke="#444"/><circle cx="9" cy="8" r="4" fill="#ddd"/><circle cx="9" cy="8" r="2.500" fill="#333"/></svg></button>
                <button aria-label="Record video"><svg viewBox="0 0 18 16"><use href="#i-cam" y="4" width="18" height="12"/><circle cx="5" cy="4" r="3.800" fill="#e01c1c"/></svg></button>
                <button class="off" aria-label="Stop recording"><svg viewBox="0 0 18 16"><use href="#i-cam" y="4" width="18" height="12"/><path d="M2.500.5h6v6h-6z" fill="#999" stroke="#777"/></svg></button>
            </div>
        </aside>
    </main>
</body>
</html>
```
FILE: styles.css
```
* {
    box-sizing: border-box;
}
body {
    margin: 0;
    height: 100vh;
    display: flex;
    flex-direction: column;
    overflow: hidden;
    background: #fff;
    font-family: "DejaVu Sans Condensed", "DejaVu Sans", sans-serif;
    font-size: 11px;
    color: #3a3c6a;
}
button {
    display: flex;
    align-items: center;
    justify-content: center;
    padding: 0;
    border: 0;
    background: none;
    font: inherit;
    color: inherit;
    cursor: pointer;
}
a {
    color: inherit;
    text-decoration: none;
}
svg {
    display: block;
    flex: none;
    width: 16px;
    height: 16px;
}
.defs {
    position: absolute;
    width: 0;
    height: 0;
}
.desktop {
    flex: none;
    height: 232px;
}

/* title bar */
.titlebar {
    flex: none;
    display: flex;
    height: 29px;
    border-bottom: 1px solid #15151c;
    background: linear-gradient(#e6e7f1, #d8dae8 50%, #c6c9dc);
}
.brand {
    display: flex;
    align-items: center;
    gap: 2px;
    width: 125px;
    padding-left: 2px;
    background: linear-gradient(#dfe0ea, #bcbfd3 55%, #c9cbdc);
}
.cube {
    width: 24px;
    height: 22px;
}
.cube-text {
    font: bold 11px "Liberation Sans", sans-serif;
    fill: #fff;
}
.brand-name {
    font: italic 14px "Open Sans", sans-serif;
    color: #222;
}
.brand-name b {
    font-weight: 800;
}
.menu {
    display: flex;
    align-items: center;
    padding: 0 8px 0 1px;
    border-left: 9px solid #7477a0;
    border-right: 1px solid #666a80;
    background: linear-gradient(#dcddea, #b9bcd3 60%, #c8cadd);
}
.menu a {
    padding: 0 7px;
}
.pin {
    width: 14px;
    margin-left: 8px;
}
.quick {
    flex: 1;
    display: flex;
    align-items: center;
    padding-left: 4px;
}
.tool {
    width: 20px;
    height: 24px;
}
.print,
.spaced {
    margin-left: 3px;
}
.drop {
    width: 16px;
    height: 24px;
}
.drop svg {
    width: 6px;
    height: 4px;
}
.select-group {
    display: flex;
    margin-right: 2px;
    border: 1px solid #8589a8;
    border-radius: 3px;
    background: #b9bcd8;
}
.select-group .drop {
    width: 12px;
    background: #dcdeec;
}
.doc-title {
    margin-left: 3px;
    color: #333;
    white-space: nowrap;
}
.search {
    display: flex;
    align-items: center;
    width: 202px;
    height: 23px;
    margin: 3px 0;
    padding-left: 5px;
    border: 1px solid #5f6378;
    border-radius: 4px;
    background: linear-gradient(#dcdfea, #fbfcfe);
}
.search input {
    flex: 1;
    min-width: 0;
    padding: 0 4px;
    border: 0;
    outline: 0;
    background: none;
    font: inherit;
    color: #444;
}
.search input::placeholder {
    color: #555;
}
.q {
    font: bold 10px "DejaVu Sans", sans-serif;
    fill: #222;
}
.q.blue {
    fill: #2450a8;
}
.window-buttons {
    display: flex;
    align-items: center;
    padding: 0 1px 0 4px;
}
.window-buttons button {
    width: 23px;
}
.window-buttons svg {
    height: 14px;
}
.window-buttons .drop {
    width: 12px;
}
.window-buttons .drop svg {
    height: 4px;
}

/* command ribbon */
.ribbon {
    flex: none;
    display: flex;
    height: 75px;
    padding-left: 1px;
    border-bottom: 2px solid #5b5d6c;
    background: linear-gradient(#fdfdff, #f4f5fa 30%, #e3e4ee 70%, #d3d5e2);
}
.ribbon hr {
    width: 1px;
    height: 64px;
    margin: 4px 2px;
    border: 0;
    background: linear-gradient(#f4f5fa, #b4b6c6, #d3d5e2);
}
.cmd {
    flex-direction: column;
    justify-content: flex-start;
    padding: 14px 4px 0;
    line-height: 13px;
    white-space: nowrap;
}
.cmd.high {
    padding-top: 7px;
}
.cmd .more {
    width: 6px;
    height: 4px;
    margin-top: 12px;
}
.cmd.apart {
    margin-left: 16px;
}
.ds-logo {
    width: 68px;
    height: 64px;
    margin: 3px 9px 0 auto;
}

/* work area */
.workspace {
    flex: 1;
    min-height: 0;
    display: grid;
    grid-template-columns: 288px 1fr 29px;
    grid-template-rows: 19px 1fr;
}
.ribbon-tabs {
    grid-area: 1 / 1 / 2 / 3;
    z-index: 2;
    display: flex;
    justify-self: start;
    background: #b9bbcc;
    font: 12px/15px "Liberation Sans", Arial, sans-serif;
    color: #555764;
}
.ribbon-tabs a {
    height: 18px;
    padding: 0 8px;
    border: 1px solid #555764;
    border-width: 1px 1px 2px 0;
    background: linear-gradient(#c1c3d4, #b3b5c8);
}
.ribbon-tabs .active {
    height: 21px;
    margin-top: -2px;
    padding-top: 2px;
    border-top: 0;
    background: linear-gradient(#d9dbe6, #f1f2f8);
    font-weight: bold;
    color: #222;
}
.manager {
    grid-area: 2 / 1 / 3 / 2;
    position: relative;
    min-height: 0;
    display: flex;
    flex-direction: column;
    padding-top: 3px;
    border-right: 2px solid #5c607a;
    background: #d2d5e8;
}
.manager-tabs {
    flex: none;
    display: flex;
    align-items: flex-end;
    height: 27px;
    border-top: 1px solid #70748c;
    border-bottom: 1px solid #70748c;
}
.manager-tabs button {
    width: 27px;
    height: 21px;
    margin-right: 1px;
    border: 1px solid #70748c;
    border-bottom: 0;
    border-radius: 3px 3px 0 0;
    background: #b6b9cf;
}
.manager-tabs .active {
    background: #e6e8f2;
}
.expand {
    margin: 0 5px 6px auto;
}
.expand svg {
    width: 9px;
    height: 8px;
}
.filter {
    flex: none;
    height: 17px;
    margin: 2px 0 3px 1px;
    padding-left: 8px;
    border: 1px solid #80849c;
    border-radius: 9px;
    background: linear-gradient(#d8dbea, #fff 40%, #f4f5fb);
}
.filter .funnel {
    width: 12px;
    height: 12px;
}
.filter button {
    height: 15px;
    gap: 3px;
}
.filter .tri {
    width: 7px;
    height: 4px;
}
.tree-box {
    flex: 1;
    min-height: 0;
    display: flex;
    overflow: hidden;
    background: #e1e4ec;
}
.tree {
    flex: 1;
    min-width: 0;
    overflow: hidden;
    font: 11px/18px "Noto Sans", sans-serif;
    color: #111;
}
.tree,
.tree ul {
    margin: 0;
    padding: 0;
    list-style: none;
}
.tree li {
    margin-left: 10px;
    border-left: 1px dotted #888;
}
.tree ul li {
    margin-left: 18px;
}
.row {
    display: flex;
    align-items: center;
    height: 18px;
    margin-left: -5px;
    white-space: nowrap;
}
.row.leaf {
    padding-left: 5px;
}
.row svg {
    margin-right: 5px;
}
.row span {
    margin-right: 5px;
}
.box {
    flex: none;
    width: 9px;
    height: 9px;
    border: 1px solid #8a8d98;
    background: linear-gradient(#223b86, #223b86) center / 5px 1px no-repeat, linear-gradient(#223b86, #223b86) center / 1px 5px no-repeat, #fff;
}
.box.minus {
    background: linear-gradient(#223b86, #223b86) center / 5px 1px no-repeat, #fff;
}
.dots {
    flex: none;
    width: 6px;
    border-top: 1px dotted #888;
}
.leaf .dots {
    width: 10px;
}
.note {
    font: bold 11px "Liberation Serif", serif;
    fill: #143a98;
}
.scrollbar {
    flex: none;
    width: 14px;
    padding-top: 7px;
    background: #f0f0f0;
}
.scrollbar .up {
    width: 6px;
    height: 4px;
    margin: 0 auto 40px;
}
.thumb {
    display: flex;
    flex-direction: column;
    align-items: center;
    justify-content: center;
    gap: 2px;
    height: 135px;
    border: 1px solid #989898;
    border-radius: 2px;
    background: linear-gradient(90deg, #f5f5f5, #d2d2d6);
}
.thumb i {
    width: 7px;
    border-top: 1px solid #555;
}
.splitter {
    position: absolute;
    top: 261px;
    left: 287px;
    z-index: 1;
    width: 10px;
    height: 28px;
    border: 1px solid #70748c;
    border-left: 0;
    border-radius: 0 4px 4px 0;
    background: #d2d5e8;
}
.splitter svg {
    width: 4px;
    height: 22px;
}

/* graphics area */
.scene {
    grid-area: 1 / 2 / 3 / 3;
    position: relative;
    overflow: hidden;
    background: #c4c7d2;
}
.model {
    position: absolute;
    width: 100%;
    height: 100%;
}
.view-tools {
    position: absolute;
    top: 4px;
    left: 382px;
    display: flex;
}
.view-tools button {
    width: 23px;
    height: 18px;
    opacity: .9;
}
.view-tools .drop {
    width: 10px;
}
.doc-buttons {
    position: absolute;
    top: 6px;
    right: 7px;
    display: flex;
}
.doc-buttons button {
    width: 23px;
}
.doc-buttons svg {
    width: 14px;
    height: 14px;
}
.task-tabs {
    position: absolute;
    top: 59px;
    right: 0;
}
.task-tabs button {
    width: 24px;
    height: 24px;
    border: 1px solid #6c7088;
    border-right: 0;
    border-radius: 4px 0 0 4px;
    background: linear-gradient(#babdce, #9fa2b8);
}
.task-tabs .active {
    background: #dfe1ea;
}
.capture {
    grid-area: 1 / 3 / 3 / 4;
    background: #e2e5f3;
}
.capture-tools {
    display: flex;
    flex-direction: column;
    align-items: center;
    gap: 7px;
    height: 90px;
    padding-top: 18px;
    border-bottom: 1px solid #888ca0;
    background: linear-gradient(90deg, #eceef8, #c3c6da);
}
.capture-tools::before {
    content: "";
    width: 22px;
    margin-top: -14px;
    margin-bottom: 4px;
    border-top: 2px dotted #80849c;
}
.capture-tools svg {
    width: 18px;
}
.off {
    color: #888;
    opacity: .7;
}
```
